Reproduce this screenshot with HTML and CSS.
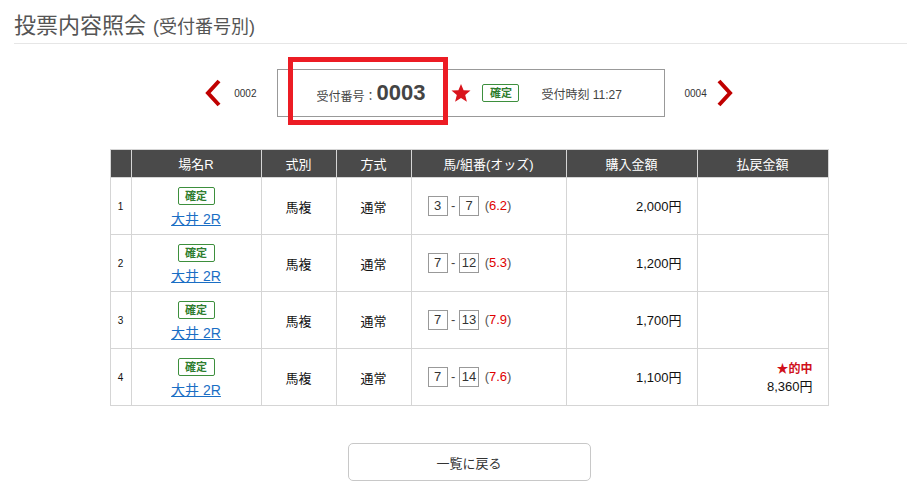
FILE: index.html
```html
<!DOCTYPE html>
<html lang="ja">
<head>
    <meta charset="UTF-8">
    <meta name="viewport" content="width=device-width, initial-scale=1.0">
    <title>投票内容照会</title>
    <link rel="stylesheet" href="styles.css">
</head>
<body>
    <header class="page-head">
        <h1>投票内容照会<span class="sub">(受付番号別)</span></h1>
    </header>
    <div class="content">
        <div class="ticket-nav">
            <a class="nav-link prev" href="#0002">
                <svg width="18" height="28" viewBox="0 0 18 28"><path d="M15 2 L4 14 L15 26" fill="none" stroke="#c00000" stroke-width="4"/></svg>
                <span>0002</span>
            </a>
            <div class="ticket-box">
                <span class="label">受付番号：</span><span class="num">0003</span>
                <svg class="star" width="20" height="20" viewBox="0 0 20 20"><polygon points="10,1 12.6,7.2 19.5,7.6 14.2,12 15.9,18.8 10,15.1 4.1,18.8 5.8,12 0.5,7.6 7.4,7.2" fill="#d9141c"/></svg>
                <span class="badge">確定</span>
                <span class="time">受付時刻 11:27</span>
                <div class="highlight"></div>
            </div>
            <a class="nav-link next" href="#0004">
                <span>0004</span>
                <svg width="18" height="28" viewBox="0 0 18 28"><path d="M3 2 L14 14 L3 26" fill="none" stroke="#c00000" stroke-width="4"/></svg>
            </a>
        </div>

        <table class="bets">
            <colgroup>
                <col style="width:21px"><col style="width:130px"><col style="width:75px"><col style="width:75px"><col style="width:155px"><col style="width:131px"><col style="width:131px">
            </colgroup>
            <thead>
                <tr><th></th><th>場名R</th><th>式別</th><th>方式</th><th>馬/組番(オッズ)</th><th>購入金額</th><th>払戻金額</th></tr>
            </thead>
            <tbody>
                <tr>
                    <td class="no">1</td>
                    <td class="race"><span class="badge">確定</span><a href="#">大井 2R</a></td>
                    <td>馬複</td><td>通常</td>
                    <td class="combo"><span class="box">3</span> - <span class="box">7</span> <span class="odds">(<em>6.2</em>)</span></td>
                    <td class="amount">2,000円</td>
                    <td class="amount"></td>
                </tr>
                <tr>
                    <td class="no">2</td>
                    <td class="race"><span class="badge">確定</span><a href="#">大井 2R</a></td>
                    <td>馬複</td><td>通常</td>
                    <td class="combo"><span class="box">7</span> - <span class="box">12</span> <span class="odds">(<em>5.3</em>)</span></td>
                    <td class="amount">1,200円</td>
                    <td class="amount"></td>
                </tr>
                <tr>
                    <td class="no">3</td>
                    <td class="race"><span class="badge">確定</span><a href="#">大井 2R</a></td>
                    <td>馬複</td><td>通常</td>
                    <td class="combo"><span class="box">7</span> - <span class="box">13</span> <span class="odds">(<em>7.9</em>)</span></td>
                    <td class="amount">1,700円</td>
                    <td class="amount"></td>
                </tr>
                <tr>
                    <td class="no">4</td>
                    <td class="race"><span class="badge">確定</span><a href="#">大井 2R</a></td>
                    <td>馬複</td><td>通常</td>
                    <td class="combo"><span class="box">7</span> - <span class="box">14</span> <span class="odds">(<em>7.6</em>)</span></td>
                    <td class="amount">1,100円</td>
                    <td class="amount"><span class="hit">★的中</span><br>8,360円</td>
                </tr>
            </tbody>
        </table>

        <div class="actions">
            <button class="back-button" type="button">一覧に戻る</button>
        </div>
    </div>
</body>
</html>
```

FILE: styles.css
```css
body {
    font-family: "Liberation Sans", "Noto Sans CJK JP", sans-serif;
    margin: 0;
    padding: 0;
    background-color: #ffffff;
    color: #111;
}
.page-head {
    margin: 0 1px 0 14px;
    padding-top: 9px;
    border-bottom: 1px solid #e6e6e6;
}
.page-head h1 {
    margin: 0;
    font-size: 22px;
    font-weight: normal;
    line-height: 34px;
    height: 34px;
    color: #555;
}
.page-head .sub {
    font-size: 18px;
    line-height: 1;
    margin-left: 7px;
}
.content {
    padding-left: 30px;
    display: flex;
    flex-direction: column;
    align-items: center;
}
.ticket-nav {
    display: flex;
    align-items: center;
    margin-top: 25px;
}
.nav-link {
    display: flex;
    align-items: center;
    color: #333;
    font-size: 10px;
    text-decoration: none;
}
.nav-link.prev span {
    margin: 0 20px 0 12px;
}
.nav-link.next span {
    margin: 0 9px 0 20px;
}
.ticket-box {
    position: relative;
    display: flex;
    align-items: center;
    box-sizing: border-box;
    width: 388px;
    height: 48px;
    padding-left: 39px;
    border: 1px solid #999;
    color: #444;
}
.ticket-box .label {
    font-size: 12px;
    margin-top: 4px;
}
.ticket-box .num {
    font-size: 22px;
    font-weight: bold;
    margin-left: 0;
}
.ticket-box .star {
    margin-left: 26px;
}
.ticket-box .badge {
    margin-left: 11px;
}
.ticket-box .time {
    font-size: 12px;
    margin-left: 22px;
}
.highlight {
    position: absolute;
    left: 10px;
    top: -13px;
    width: 160px;
    height: 68px;
    box-sizing: border-box;
    border: 5px solid #ec1c24;
}
.badge {
    display: inline-block;
    box-sizing: border-box;
    width: 37px;
    height: 18px;
    line-height: 16px;
    border: 1px solid #3d8f3d;
    border-radius: 2px;
    color: #2f7d2f;
    font-size: 11px;
    font-weight: bold;
    text-align: center;
}
.bets {
    margin-top: 32px;
    width: 718px;
    table-layout: fixed;
    border-collapse: collapse;
    border: 1px solid #d5d5d5;
    font-size: 13px;
}
.bets th {
    background-color: #4a4a4a;
    color: #ffffff;
    font-weight: normal;
    height: 27px;
    padding: 0;
    border: 1px solid #d5d5d5;
}
.bets td {
    height: 56px;
    padding: 0;
    border: 1px solid #d5d5d5;
    text-align: center;
}
.bets td.no {
    font-size: 10px;
}
.bets td.race {
    line-height: 1;
}
.bets td.race .badge {
    margin-bottom: 7px;
}
.bets td.race a {
    display: block;
    color: #1a6ec4;
    font-size: 14px;
}
.bets td.combo {
    text-align: left;
    padding-left: 16px;
    color: #444;
}
.box {
    display: inline-block;
    box-sizing: border-box;
    min-width: 20px;
    height: 20px;
    line-height: 18px;
    border: 1px solid #999;
    text-align: center;
    color: #333;
}
.odds {
    margin-left: 2px;
    color: #555;
}
.odds em {
    font-style: normal;
    color: #e00000;
}
.bets td.amount {
    text-align: right;
    padding-right: 15px;
    line-height: 17px;
}
.hit {
    color: #d0101b;
    font-weight: bold;
    font-size: 12px;
}
.actions {
    margin-top: 37px;
}
.back-button {
    width: 243px;
    height: 38px;
    background-color: #ffffff;
    border: 1px solid #c8c8c8;
    border-radius: 5px;
    font-family: "Liberation Sans", "Noto Sans CJK JP", sans-serif;
    font-size: 13px;
    color: #333;
}
```
